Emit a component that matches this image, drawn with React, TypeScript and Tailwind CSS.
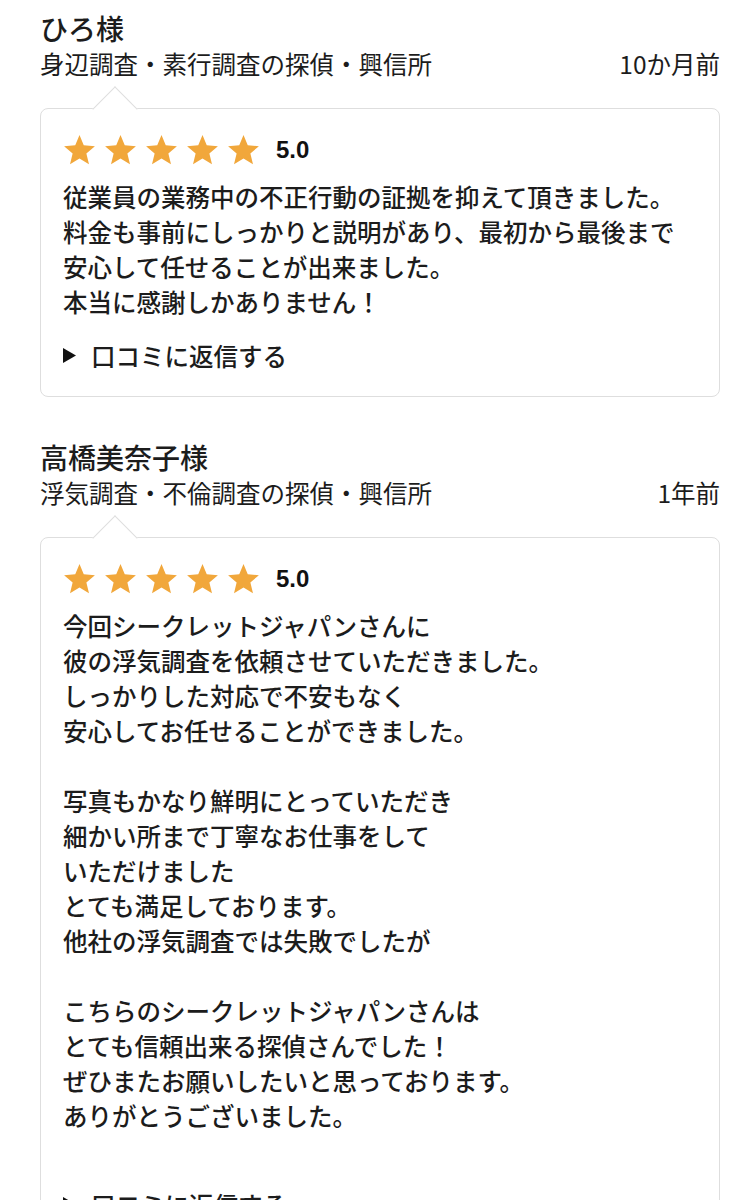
import React from "react";

type Review = {
  name: string;
  category: string;
  ago: string;
  rating: string;
  lines: string[];
};

const reviews: Review[] = [
  {
    name: "ひろ様",
    category: "身辺調査・素行調査の探偵・興信所",
    ago: "10か月前",
    rating: "5.0",
    lines: [
      "従業員の業務中の不正行動の証拠を抑えて頂きました。",
      "料金も事前にしっかりと説明があり、最初から最後まで",
      "安心して任せることが出来ました。",
      "本当に感謝しかありません！",
    ],
  },
  {
    name: "高橋美奈子様",
    category: "浮気調査・不倫調査の探偵・興信所",
    ago: "1年前",
    rating: "5.0",
    lines: [
      "今回シークレットジャパンさんに",
      "彼の浮気調査を依頼させていただきました。",
      "しっかりした対応で不安もなく",
      "安心してお任せることができました。",
      "",
      "写真もかなり鮮明にとっていただき",
      "細かい所まで丁寧なお仕事をして",
      "いただけました",
      "とても満足しております。",
      "他社の浮気調査では失敗でしたが",
      "",
      "こちらのシークレットジャパンさんは",
      "とても信頼出来る探偵さんでした！",
      "ぜひまたお願いしたいと思っております。",
      "ありがとうございました。",
      "",
    ],
  },
];

const Star = () => (
  <svg width="33" height="32" viewBox="0 0 24 23" className="shrink-0">
    <path
      d="M12 0.6l3.1 7.5 8.1 0.6-6.2 5.3 1.9 7.9L12 17.6l-6.9 4.3 1.9-7.9-6.2-5.3 8.1-0.6z"
      fill="#F1A73B"
    />
  </svg>
);

const ReviewCard = ({review}: { review: Review }) => (
  <div>
    <div className="text-[28px] leading-[36px] font-medium text-[#1c1c1c]">{review.name}</div>
    <div className="flex justify-between text-[24.5px] leading-[36px] text-[#1c1c1c]">
      <span>{review.category}</span>
      <span>{review.ago}</span>
    </div>

    <div className="relative mt-[26px] rounded-lg border border-[#dedede] bg-white pl-[22px] pr-4 pt-[23px] pb-[23px]">
      {/* speech bubble tail */}
      <div className="absolute left-[58px] top-[-16px] h-8 w-8 rotate-45 border-l border-t border-[#dedede] bg-white" />

      <div className="relative flex items-center">
        <div className="flex gap-[8px]">
          <Star />
          <Star />
          <Star />
          <Star />
          <Star />
        </div>
        <span className="ml-4 text-[24px] font-bold text-[#111] [font-family:'Liberation_Sans',Arial,sans-serif]">
          {review.rating}
        </span>
      </div>

      <div className="mt-[11px] text-[24.5px] leading-[35px] font-medium text-[#1c1c1c]">
        {review.lines.map((line, i) => (
          <div key={i} className="whitespace-nowrap">{line === "" ? "\u00a0" : line}</div>
        ))}
      </div>

      <div className="mt-[19px] flex items-center text-[24.5px] leading-[35px] font-medium text-[#1c1c1c]">
        <svg width="13" height="15" viewBox="0 0 13 15" className="mr-[15px]">
          <path d="M0 0 L13 7.5 L0 15 Z" fill="#111"/>
        </svg>
        口コミに返信する
      </div>
    </div>
  </div>
);

export default function App() {
  return (
    <div className="min-h-screen bg-white pl-10 pr-8 pt-[10px] [font-family:'Noto_Sans_CJK_JP','Noto_Sans',sans-serif]">
      <div className="flex flex-col gap-[42px]">
        {reviews.map((r, i) => (
          <ReviewCard key={i} review={r}/>
        ))}
      </div>
    </div>
  );
}
